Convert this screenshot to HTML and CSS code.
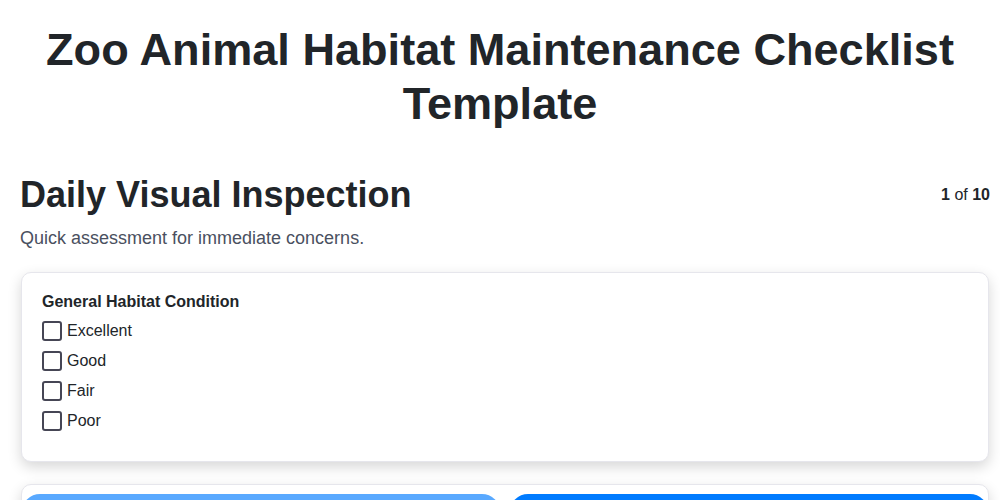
FILE: index.html
```html
<!DOCTYPE html>
<html lang="en">
<head>
<meta charset="utf-8">
<title>Zoo Animal Habitat Maintenance Checklist Template</title>
<link rel="stylesheet" href="styles.css">
</head>
<body>
<main class="page">
  <h1 class="title">Zoo Animal Habitat Maintenance Checklist Template</h1>
  <section class="step">
    <div class="step-header">
      <h2 class="step-title">Daily Visual Inspection</h2>
      <div class="step-count"><strong>1</strong> of <strong>10</strong></div>
    </div>
    <p class="step-desc">Quick assessment for immediate concerns.</p>
    <div class="card">
      <div class="field-label">General Habitat Condition</div>
      <div class="options">
        <label class="option"><input type="checkbox" class="box"><span>Excellent</span></label>
        <label class="option"><input type="checkbox" class="box"><span>Good</span></label>
        <label class="option"><input type="checkbox" class="box"><span>Fair</span></label>
        <label class="option"><input type="checkbox" class="box"><span>Poor</span></label>
      </div>
    </div>
    <div class="nav-card">
      <button class="btn btn-prev" disabled>Previous</button>
      <button class="btn btn-next">Next</button>
    </div>
  </section>
</main>
</body>
</html>
```

FILE: styles.css
```css
* { box-sizing: border-box; }
html, body {
  margin: 0;
  padding: 0;
  background: #ffffff;
}
body {
  font-family: "Liberation Sans", Arial, sans-serif;
  color: #212529;
}
.page {
  padding: 23px 0 20px;
}
.title {
  margin: 0;
  font-size: 45.1px;
  line-height: 1.2;
  font-weight: 700;
  text-align: center;
  color: #212529;
}
.step {
  margin-top: 43px;
  padding: 0 10px 0 20px;
}
.step-header {
  display: flex;
  justify-content: space-between;
  align-items: center;
}
.step-title {
  margin: 0;
  font-size: 36px;
  font-weight: 700;
  color: #212529;
}
.step-count {
  font-size: 16px;
  color: #212529;
}
.step-desc {
  margin: 12px 0 0;
  font-size: 18px;
  color: #4a5060;
}
.card {
  margin: 23px 1px 0;
  background: #fff;
  border: 1px solid #e6e6ec;
  border-radius: 10px;
  padding: 20px 20px 30px;
  box-shadow: 0 5px 14px rgba(0, 0, 0, 0.16);
}
.field-label {
  font-size: 16px;
  font-weight: 700;
  color: #212529;
}
.options {
  margin-top: 10px;
  display: flex;
  flex-direction: column;
  gap: 10px;
}
.option {
  display: flex;
  align-items: center;
  gap: 5px;
  font-size: 16px;
  color: #212529;
  height: 20px;
}
.box {
  appearance: none;
  -webkit-appearance: none;
  margin: 0;
  width: 20px;
  height: 20px;
  border: 2px solid #464655;
  border-radius: 3px;
  background: #fff;
}
.nav-card {
  margin: 22px 1px 0;
  display: flex;
  gap: 10px;
  padding: 9px 0;
  background: #fff;
  border: 1px solid #e6e6ec;
  border-radius: 10px;
  box-shadow: 0 5px 14px rgba(0, 0, 0, 0.16);
}
.btn {
  flex: 1;
  height: 44px;
  border: none;
  border-radius: 18px;
  font-family: "Liberation Sans", Arial, sans-serif;
  font-size: 16px;
  font-weight: 700;
  color: #fff;
  background: #007bff;
}
.btn-prev {
  background: #59a9ff;
}
```
